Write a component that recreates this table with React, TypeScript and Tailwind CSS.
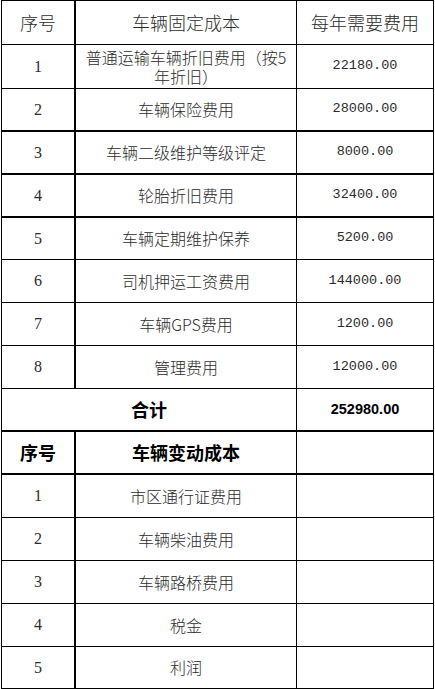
import clsx from 'clsx'

type Row = { no: string; item: string[]; cost: string; h: string; line: string }

const CJK = "font-['Noto_Sans_CJK_SC',sans-serif]"
const MONO = "font-['Liberation_Mono','Noto_Sans_CJK_SC',monospace]"

const fixedRows: Row[] = [
  { no: '1', item: ['普通运输车辆折旧费用（按5', '年折旧）'], cost: '22180.00', h: 'h-[44px]', line: 'border-b' },
  { no: '2', item: ['车辆保险费用'],       cost: '28000.00',  h: 'h-[43px]', line: 'border-b-2' },
  { no: '3', item: ['车辆二级维护等级评定'], cost: '8000.00',   h: 'h-[43px]', line: 'border-b-2' },
  { no: '4', item: ['轮胎折旧费用'],       cost: '32400.00',  h: 'h-[43px]', line: 'border-b-2' },
  { no: '5', item: ['车辆定期维护保养'],     cost: '5200.00',   h: 'h-[42px]', line: 'border-b' },
  { no: '6', item: ['司机押运工资费用'],     cost: '144000.00', h: 'h-[43px]', line: 'border-b' },
  { no: '7', item: ['车辆GPS费用'],        cost: '1200.00',   h: 'h-[43px]', line: 'border-b' },
  { no: '8', item: ['管理费用'],           cost: '12000.00',  h: 'h-[43px]', line: 'border-b' },
]

// variable costs have no amounts filled in
const variableRows: Row[] = [
  { no: '1', item: ['市区通行证费用'], cost: '', h: 'h-[43px]', line: 'border-b' },
  { no: '2', item: ['车辆柴油费用'],   cost: '', h: 'h-[43px]', line: 'border-b' },
  { no: '3', item: ['车辆路桥费用'],   cost: '', h: 'h-[43px]', line: 'border-b' },
  { no: '4', item: ['税金'],          cost: '', h: 'h-[43px]', line: 'border-b' },
  { no: '5', item: ['利润'],          cost: '', h: 'h-[43px]', line: 'border-b-2' },
]

function Cells({ row }: { row: Row }) {
  return (
    <div className={clsx('flex border-black', row.h, row.line)}>
      <div className={clsx('w-[74px] shrink-0 border-r-2 border-black flex items-center justify-center text-[16px] text-[#2b2b2b]', "font-['Liberation_Serif',serif]")}>
        {row.no}
      </div>
      <div className={clsx('w-[221px] shrink-0 border-r border-black flex flex-col items-center justify-center text-[16px] text-[#2b2b2b] font-light', CJK)}>
        {row.item.map((t) => (
          <div key={t} className="h-[19px] leading-[19px] whitespace-nowrap">{t}</div>
        ))}
      </div>
      <div className={clsx('flex-1 flex items-center justify-center text-[13.5px] text-[#2b2b2b]', MONO)}>
        {row.cost}
      </div>
    </div>
  )
}

export default function App() {
  return (
    <div className="w-[435px] h-[689px] bg-white overflow-hidden">
      <div className="ml-px w-[433px] border-t border-l border-r border-black">
        {/* fixed cost header */}
        <div className={clsx('flex h-[44px] border-b border-black text-[18px] text-[#2b2b2b] font-light', CJK)}>
          <div className="w-[74px] shrink-0 border-r-2 border-black flex items-center justify-center">序号</div>
          <div className="w-[221px] shrink-0 border-r border-black flex items-center justify-center">车辆固定成本</div>
          <div className="flex-1 flex items-center justify-center">每年需要费用</div>
        </div>

        {fixedRows.map((r) => <Cells key={'f' + r.no} row={r} />)}

        {/* total */}
        <div className="flex h-[43px] border-b-2 border-black">
          <div className={clsx('w-[295px] shrink-0 border-r border-black flex items-center justify-center text-[18px] font-bold text-black', CJK)}>
            合计
          </div>
          <div className="flex-1 flex items-center justify-center text-[14.5px] font-bold text-black font-['Liberation_Sans',sans-serif]">
            252980.00
          </div>
        </div>

        {/* variable cost header */}
        <div className={clsx('flex h-[43px] border-b-2 border-black text-[18px] font-bold text-black', CJK)}>
          <div className="w-[74px] shrink-0 border-r-2 border-black flex items-center justify-center">序号</div>
          <div className="w-[221px] shrink-0 border-r border-black flex items-center justify-center">车辆变动成本</div>
          <div className="flex-1" />
        </div>

        {variableRows.map((r) => <Cells key={'v' + r.no} row={r} />)}
      </div>
    </div>
  )
}
